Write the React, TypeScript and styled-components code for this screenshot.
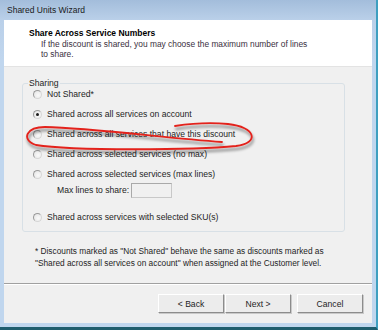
import React from 'react';
import styled, { createGlobalStyle } from 'styled-components';

const GlobalStyle = createGlobalStyle`
  html, body {
    margin: 0;
    padding: 0;
    background: #ffffff;
  }
  body {
    font-family: "Liberation Sans", Arial, sans-serif;
  }
`;

const Window = styled.div`
  position: relative;
  width: 378px;
  height: 330px;
  box-sizing: border-box;
  display: flex;
  flex-direction: column;
  background: linear-gradient(to bottom, #a3bddb 0px, #bad0e9 20px, #c0d6ee 60px, #c0d6ee 100%);
  border-right: 2px solid #3e9fc0;
  border-bottom: 3px solid #1f5d6e;
`;

const TitleBar = styled.div`
  height: 20px;
  flex: none;
  display: flex;
  align-items: center;
  padding-left: 7px;
  font-size: 8.5px;
  color: #1a1a1a;
`;

const Client = styled.div`
  flex: 1;
  margin: 0 4px 4px 4px;
  display: flex;
  flex-direction: column;
  background: #f0f0f0;
`;

const Header = styled.div`
  height: 47px;
  flex: none;
  background: #ffffff;
  border-bottom: 1px solid #e3e3e3;
  padding: 8px 0 0 25px;
  box-sizing: border-box;
`;

const HeaderTitle = styled.div`
  font-weight: bold;
  font-size: 8.5px;
  line-height: 10px;
  color: #000;
`;

const HeaderText = styled.div`
  font-size: 8.4px;
  line-height: 10px;
  color: #3a3040;
  margin: 1px 0 0 12px;
  width: 280px;
`;

const Group = styled.fieldset`
  margin: 11px 27px 0 18px;
  padding: 0 0 8px 10px;
  border: 1px solid #d8e0e6;
  border-radius: 3px;
  display: flex;
  flex-direction: column;
  gap: 8px;
  min-width: 0;
`;

const Legend = styled.legend`
  font-size: 8.6px;
  line-height: 10px;
  padding: 0 1px;
  margin-left: -5px;
  color: #1e1e1e;
`;

const Row = styled.div<{ $top?: number }>`
  height: 12px;
  display: flex;
  align-items: center;
  gap: 5px;
  font-size: 8.6px;
  color: #1e1e1e;
  margin-top: ${(p) => (p.$top ? `${p.$top}px` : '0')};
`;

const Radio = styled.span<{ $checked?: boolean }>`
  width: 9px;
  height: 9px;
  box-sizing: border-box;
  border-radius: 50%;
  border: 1px solid #9a9a9a;
  border-right-color: #d6d6d6;
  border-bottom-color: #d6d6d6;
  background: radial-gradient(circle at 60% 60%, #fafafa 0%, #e9e9e9 70%);
  display: flex;
  align-items: center;
  justify-content: center;
  flex: none;
  &::after {
    content: '';
    width: 3px;
    height: 3px;
    border-radius: 50%;
    background: ${(p) => (p.$checked ? '#1a1a1a' : 'transparent')};
  }
`;

const SubRow = styled.div`
  height: 16px;
  margin: -6px 0 0 24px;
  display: flex;
  align-items: center;
  gap: 2px;
  font-size: 8.6px;
  color: #1e1e1e;
`;

const NumberBox = styled.div`
  width: 41px;
  height: 15px;
  box-sizing: border-box;
  background: #f0f0f0;
  border: 1px solid #c8c8c8;
  border-top-color: #a9a9a9;
  border-left-color: #a9a9a9;
`;

const Note = styled.div`
  margin: 13px 0 0 31px;
  font-size: 8.3px;
  line-height: 12px;
  color: #1e1e1e;
  white-space: nowrap;
`;

const Spacer = styled.div`
  flex: 1;
`;

const Separator = styled.div`
  height: 0;
  border-top: 1px solid #a0a0a0;
  border-bottom: 1px solid #ffffff;
`;

const ButtonBar = styled.div`
  flex: none;
  display: flex;
  justify-content: flex-end;
  padding: 9px 9px 10px 0;
`;

const Button = styled.div<{ $gap?: number }>`
  width: 66px;
  height: 19px;
  box-sizing: border-box;
  display: flex;
  align-items: center;
  justify-content: center;
  font-size: 8.6px;
  color: #1e1e1e;
  background: #ececec;
  border: 1px solid #ffffff;
  border-right-color: #8c8c8c;
  border-bottom-color: #8c8c8c;
  box-shadow: 1px 1px 0 #c9c9c9;
  margin-left: ${(p) => (p.$gap ? `${p.$gap}px` : '0')};
`;

const Annotation = styled.svg`
  position: absolute;
  left: 0;
  top: 0;
  pointer-events: none;
`;

const options = [
  { label: 'Not Shared*', checked: false },
  { label: 'Shared across all services on account', checked: true },
  { label: 'Shared across all services that have this discount', checked: false },
  { label: 'Shared across selected services (no max)', checked: false },
  { label: 'Shared across selected services (max lines)', checked: false },
];

export default function App() {
  return (
    <>
      <GlobalStyle />
      <Window>
        <TitleBar>Shared Units Wizard</TitleBar>
        <Client>
          <Header>
            <HeaderTitle>Share Across Service Numbers</HeaderTitle>
            <HeaderText>
              If the discount is shared, you may choose the maximum number of lines
              <br />
              to share.
            </HeaderText>
          </Header>
          <Group>
            <Legend>Sharing</Legend>
            {options.map((o) => (
              <Row key={o.label}>
                <Radio $checked={o.checked} />
                {o.label}
              </Row>
            ))}
            <SubRow>
              Max lines to share:
              <NumberBox />
            </SubRow>
            <Row $top={5}>
              <Radio />
              Shared across services with selected SKU(s)
            </Row>
          </Group>
          <Note>
            * Discounts marked as "Not Shared" behave the same as discounts marked as
            <br />
            "Shared across all services on account" when assigned at the Customer level.
          </Note>
          <Spacer />
          <Separator />
          <ButtonBar>
            <Button>&lt; Back</Button>
            <Button $gap={1}>Next &gt;</Button>
            <Button $gap={6}>Cancel</Button>
          </ButtonBar>
        </Client>
        <Annotation width="378" height="330" viewBox="0 0 378 330">
          <defs>
            <filter id="shade" x="-10%" y="-50%" width="120%" height="200%">
              <feGaussianBlur in="SourceAlpha" stdDeviation="1.8" />
              <feOffset dx="1" dy="3" result="blur" />
              <feComponentTransfer>
                <feFuncA type="linear" slope="0.5" />
              </feComponentTransfer>
              <feMerge>
                <feMergeNode />
                <feMergeNode in="SourceGraphic" />
              </feMerge>
            </filter>
          </defs>
          <path
            d="M 222 142 C 165 138, 92 128, 45 127 C 27 127, 20 139, 36 145 C 72 151, 195 150, 236 146 C 260 143, 256 127, 228 124 C 208 122, 188 124, 175 126"
            fill="none"
            stroke="#e3231c"
            strokeWidth="1.8"
            strokeLinecap="round"
            filter="url(#shade)"
          />
        </Annotation>
      </Window>
    </>
  );
}
